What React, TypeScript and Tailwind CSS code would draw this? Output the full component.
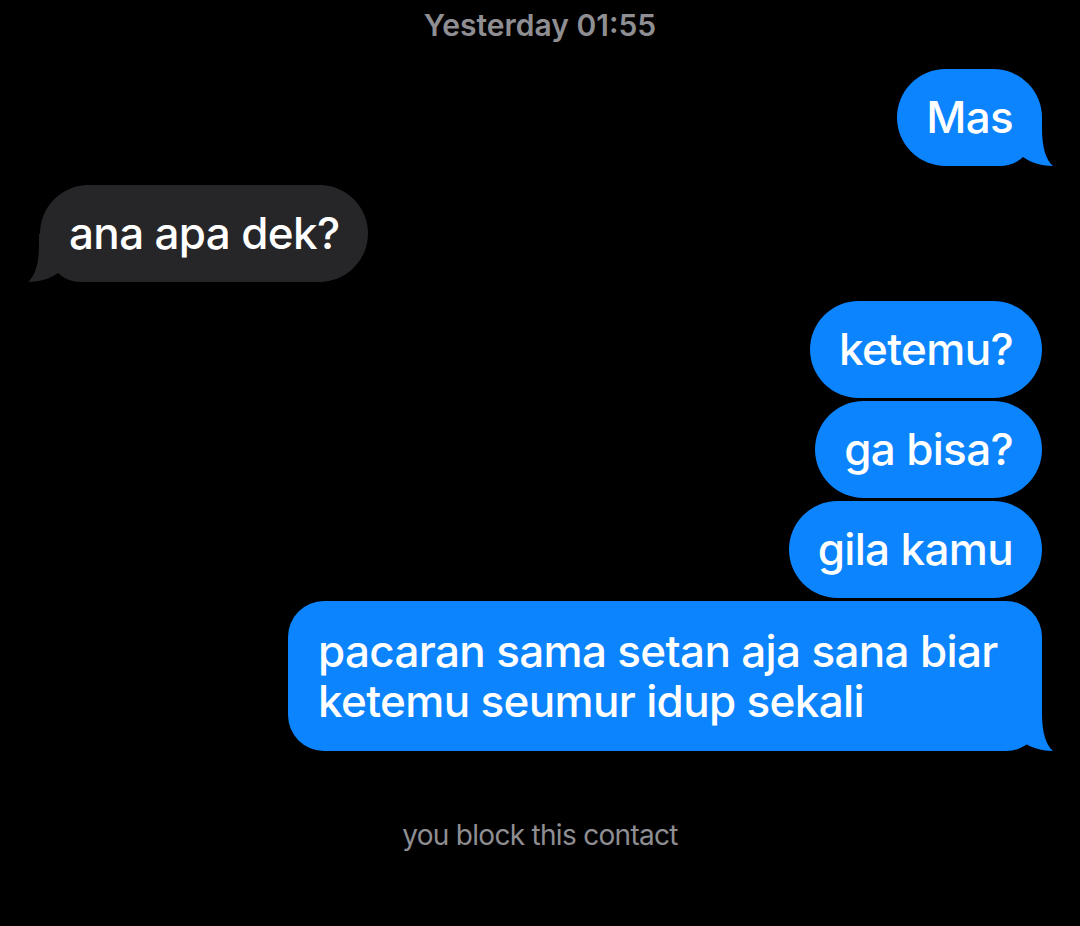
import React from "react";

type Msg = {
  text: React.ReactNode;
  fromMe: boolean;
  tail?: boolean;
  gap: string;
  wide?: boolean;
};

const MESSAGES: Msg[] = [
  { text: "Mas", fromMe: true, tail: true, gap: "mt-[24px]" },
  { text: "ana apa dek?", fromMe: false, tail: true, gap: "mt-[19px]" },
  { text: "ketemu?", fromMe: true, gap: "mt-[19px]" },
  { text: "ga bisa?", fromMe: true, gap: "mt-[3px]" },
  { text: "gila kamu", fromMe: true, gap: "mt-[3px]" },
  {
    text: (
      <>
        pacaran sama setan aja sana biar
        <br />
        ketemu seumur idup sekali
      </>
    ),
    fromMe: true,
    tail: true,
    gap: "mt-[3px]",
    wide: true,
  },
];

// bubble tail, drawn for the right side; mirrored for incoming messages
function Tail({ color, left }: { color: string; left?: boolean }) {
  return (
    <svg
      width="60"
      height="48"
      viewBox="0 0 60 48"
      className={
        left
          ? "absolute bottom-0 left-[-12px] -scale-x-100"
          : "absolute bottom-0 right-[-11px]"
      }
    >
      <path
        d="M0 0 L49 0 L49 10 C49 30 53 42 60 48 C50 48 38 45 30 39 C24 45 15 48 7 48 L0 48 Z"
        fill={color}
      />
    </svg>
  );
}

function Bubble({ msg }: { msg: Msg }) {
  const color = msg.fromMe ? "#0b84fe" : "#262629";
  return (
    <div
      className={`flex ${msg.fromMe ? "justify-end pr-[38px]" : "justify-start pl-[40px]"} ${msg.gap}`}
    >
      <div
        className={`relative text-white text-[44px] font-medium leading-[50px] tracking-[-0.015em] ${
          msg.wide
            ? "w-[754px] px-[30px] py-[25px] rounded-[36px]"
            : "px-[29px] pt-[23px] pb-[24px] rounded-[49px]"
        } ${msg.fromMe ? "bg-[#0b84fe]" : "bg-[#262629]"}`}
      >
        {msg.tail && <Tail color={color} left={!msg.fromMe} />}
        <span className="relative">{msg.text}</span>
      </div>
    </div>
  );
}

export default function App() {
  return (
    <div
      className="w-full h-[926px] bg-black flex flex-col pt-[5px] overflow-hidden"
      style={{ fontFamily: "Inter, 'Noto Sans', sans-serif" }}
    >
      <div className="text-center text-[30px] leading-[40px] font-semibold text-[#8e8e93]">
        Yesterday 01:55
      </div>

      {MESSAGES.map((m, i) => (
        <Bubble key={i} msg={m} />
      ))}

      <div className="mt-[64px] text-center text-[28px] leading-[40px] tracking-[-0.025em] text-[#8e8e93]">
        you block this contact
      </div>
    </div>
  );
}
